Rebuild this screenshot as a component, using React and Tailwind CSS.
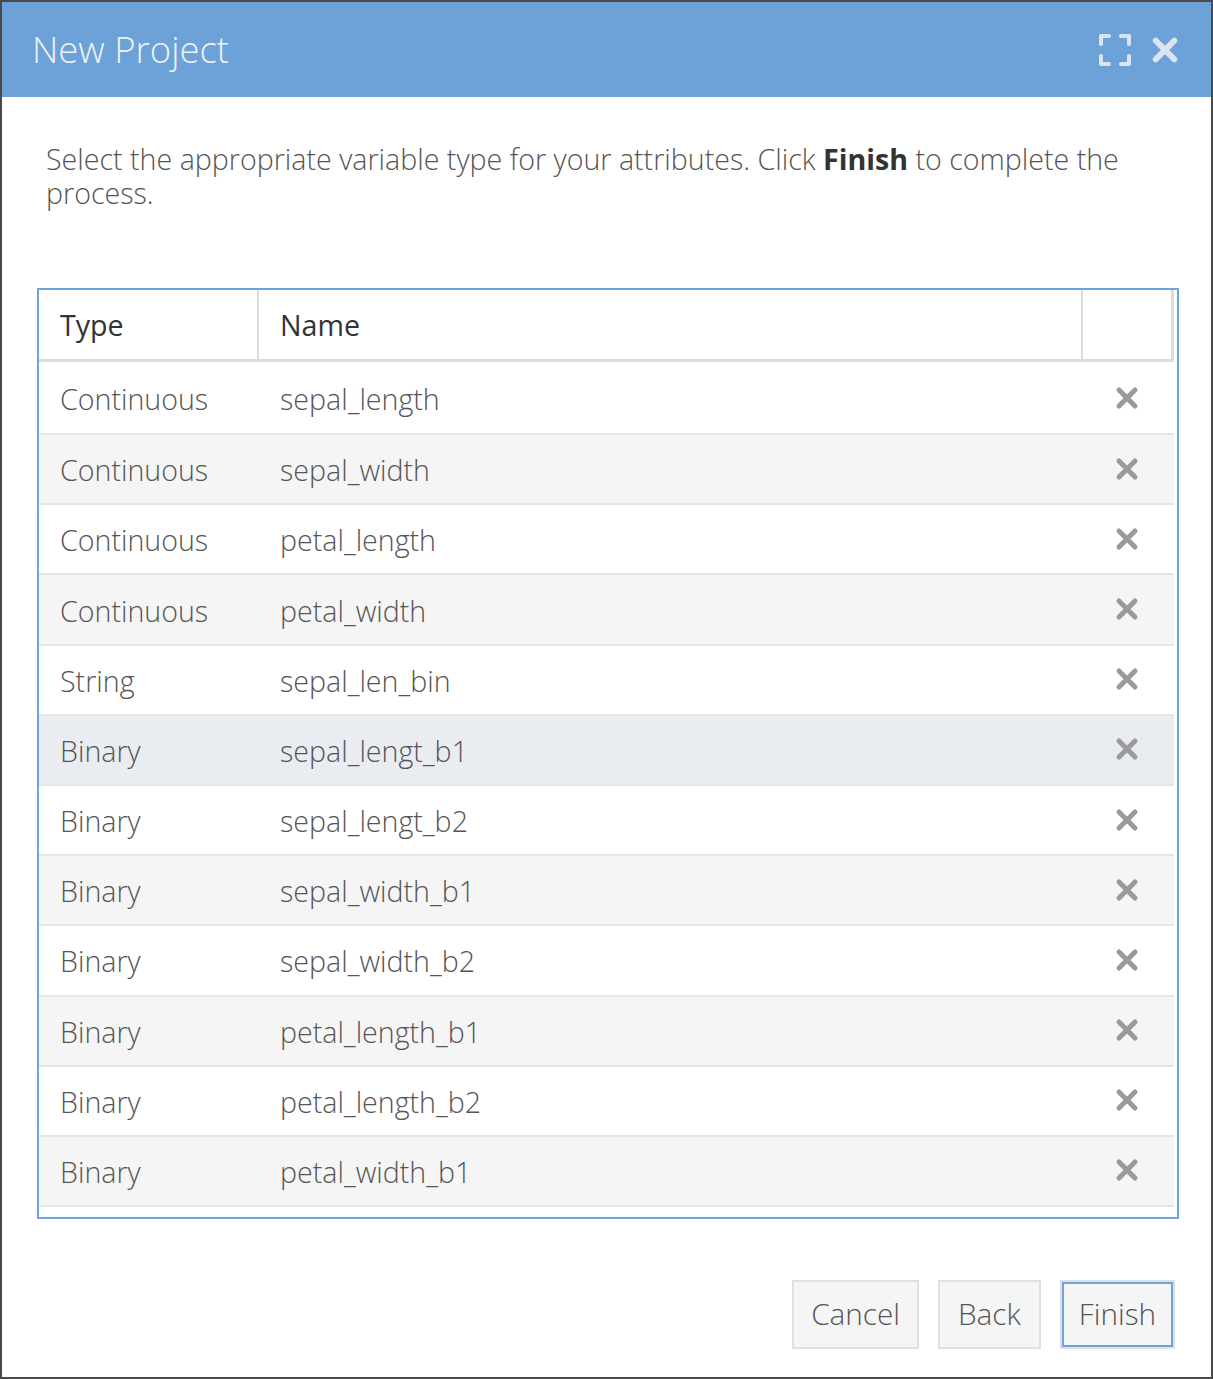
import React from "react";

const rows = [
  ["Continuous", "sepal_length"],
  ["Continuous", "sepal_width"],
  ["Continuous", "petal_length"],
  ["Continuous", "petal_width"],
  ["String", "sepal_len_bin"],
  ["Binary", "sepal_lengt_b1"],
  ["Binary", "sepal_lengt_b2"],
  ["Binary", "sepal_width_b1"],
  ["Binary", "sepal_width_b2"],
  ["Binary", "petal_length_b1"],
  ["Binary", "petal_length_b2"],
  ["Binary", "petal_width_b1"],
];

const XIcon = ({ className }) => (
  <svg viewBox="0 0 24 24" className={className} fill="none" stroke="currentColor" strokeWidth="5" strokeLinecap="round">
    <path d="M4 4L20 20M20 4L4 20" />
  </svg>
);

const ExpandIcon = () => (
  <svg viewBox="0 0 32 32" className="w-[32px] h-[32px]" fill="none" stroke="currentColor" strokeWidth="4" strokeLinecap="round" strokeLinejoin="round">
    <path d="M2 10V2H10M22 2H30V10M30 22V30H22M10 30H2V22" />
  </svg>
);

const App = () => {
  return (
    <div
      className="w-[1213px] h-[1379px] border-2 border-[#4a4a4a] bg-white flex flex-col font-light"
      style={{ fontFamily: '"Open Sans", "Noto Sans", sans-serif' }}
    >
      <div className="h-[95px] bg-[#6ca2d8] flex items-center justify-between pl-[30px] pr-[32px]">
        <h1 className="text-[36.5px] text-[#eef2f7] font-light">New Project</h1>
        <div className="flex items-center gap-[20px] text-[#dbe5f0]">
          <ExpandIcon />
          <XIcon className="w-[28px] h-[28px]" />
        </div>
      </div>

      <div className="flex-1 flex flex-col pl-[35px] pr-[32px]">
        <p className="mt-[45px] pl-[9px] text-[28.6px] leading-[34px] text-[#555]">
          Select the appropriate variable type for your attributes. Click{" "}
          <b className="text-[#333] font-bold">Finish</b> to complete the process.
        </p>

        <div className="mt-[78px] border-2 border-[#6fa3dd] h-[931px] overflow-hidden">
          <div className="flex h-[72px] border-b-[3px] border-[#dcdcdc] mr-[3px] border-r-[3px] text-[28.6px] text-[#333] font-normal">
            <div className="w-[220px] flex items-center pl-[21px] pt-[2px] border-r-2 border-[#dcdcdc]">Type</div>
            <div className="flex-1 flex items-center pl-[21px] pt-[2px] border-r-2 border-[#dcdcdc]">Name</div>
            <div className="w-[88px]" />
          </div>
          {rows.map(([type, name], i) => (
            <div
              key={name}
              className={
                "flex h-[70.2px] border-b-2 border-[#e6e6e6] mr-[3px] text-[28.6px] text-[#555] " +
                (i === 0 ? "h-[73px] pt-[4px] " : "pt-[3px] ") +
                (i === 5 ? "bg-[#e9edf2]" : i % 2 === 1 ? "bg-[#f5f5f5]" : "bg-white")
              }
            >
              <div className="w-[220px] flex items-center pl-[21px]">{type}</div>
              <div className="flex-1 flex items-center pl-[21px]">{name}</div>
              <div className="w-[88px] flex items-center justify-center text-[#9a9a9a] pr-[6px] pb-[4px]">
                <XIcon className="w-[24px] h-[24px]" />
              </div>
            </div>
          ))}
          <div className="h-[20px] bg-white" />
        </div>

        <div className="flex justify-end gap-[19px] mt-[61px] pr-[4px]">
          <button className="h-[69px] px-[17px] bg-[#f5f5f5] border-2 border-[#e0e0e0] text-[29.7px] text-[#555]">Cancel</button>
          <button className="h-[69px] px-[18px] bg-[#f5f5f5] border-2 border-[#e0e0e0] text-[29.7px] text-[#555]">Back</button>
          <button className="h-[69px] px-[17px] bg-[#f5f5f5] border-2 border-[#e0e0e0] outline-2 outline-[#6fa3dd] -outline-offset-4 text-[29.7px] text-[#555]">Finish</button>
        </div>
      </div>
    </div>
  );
};

export default App;
